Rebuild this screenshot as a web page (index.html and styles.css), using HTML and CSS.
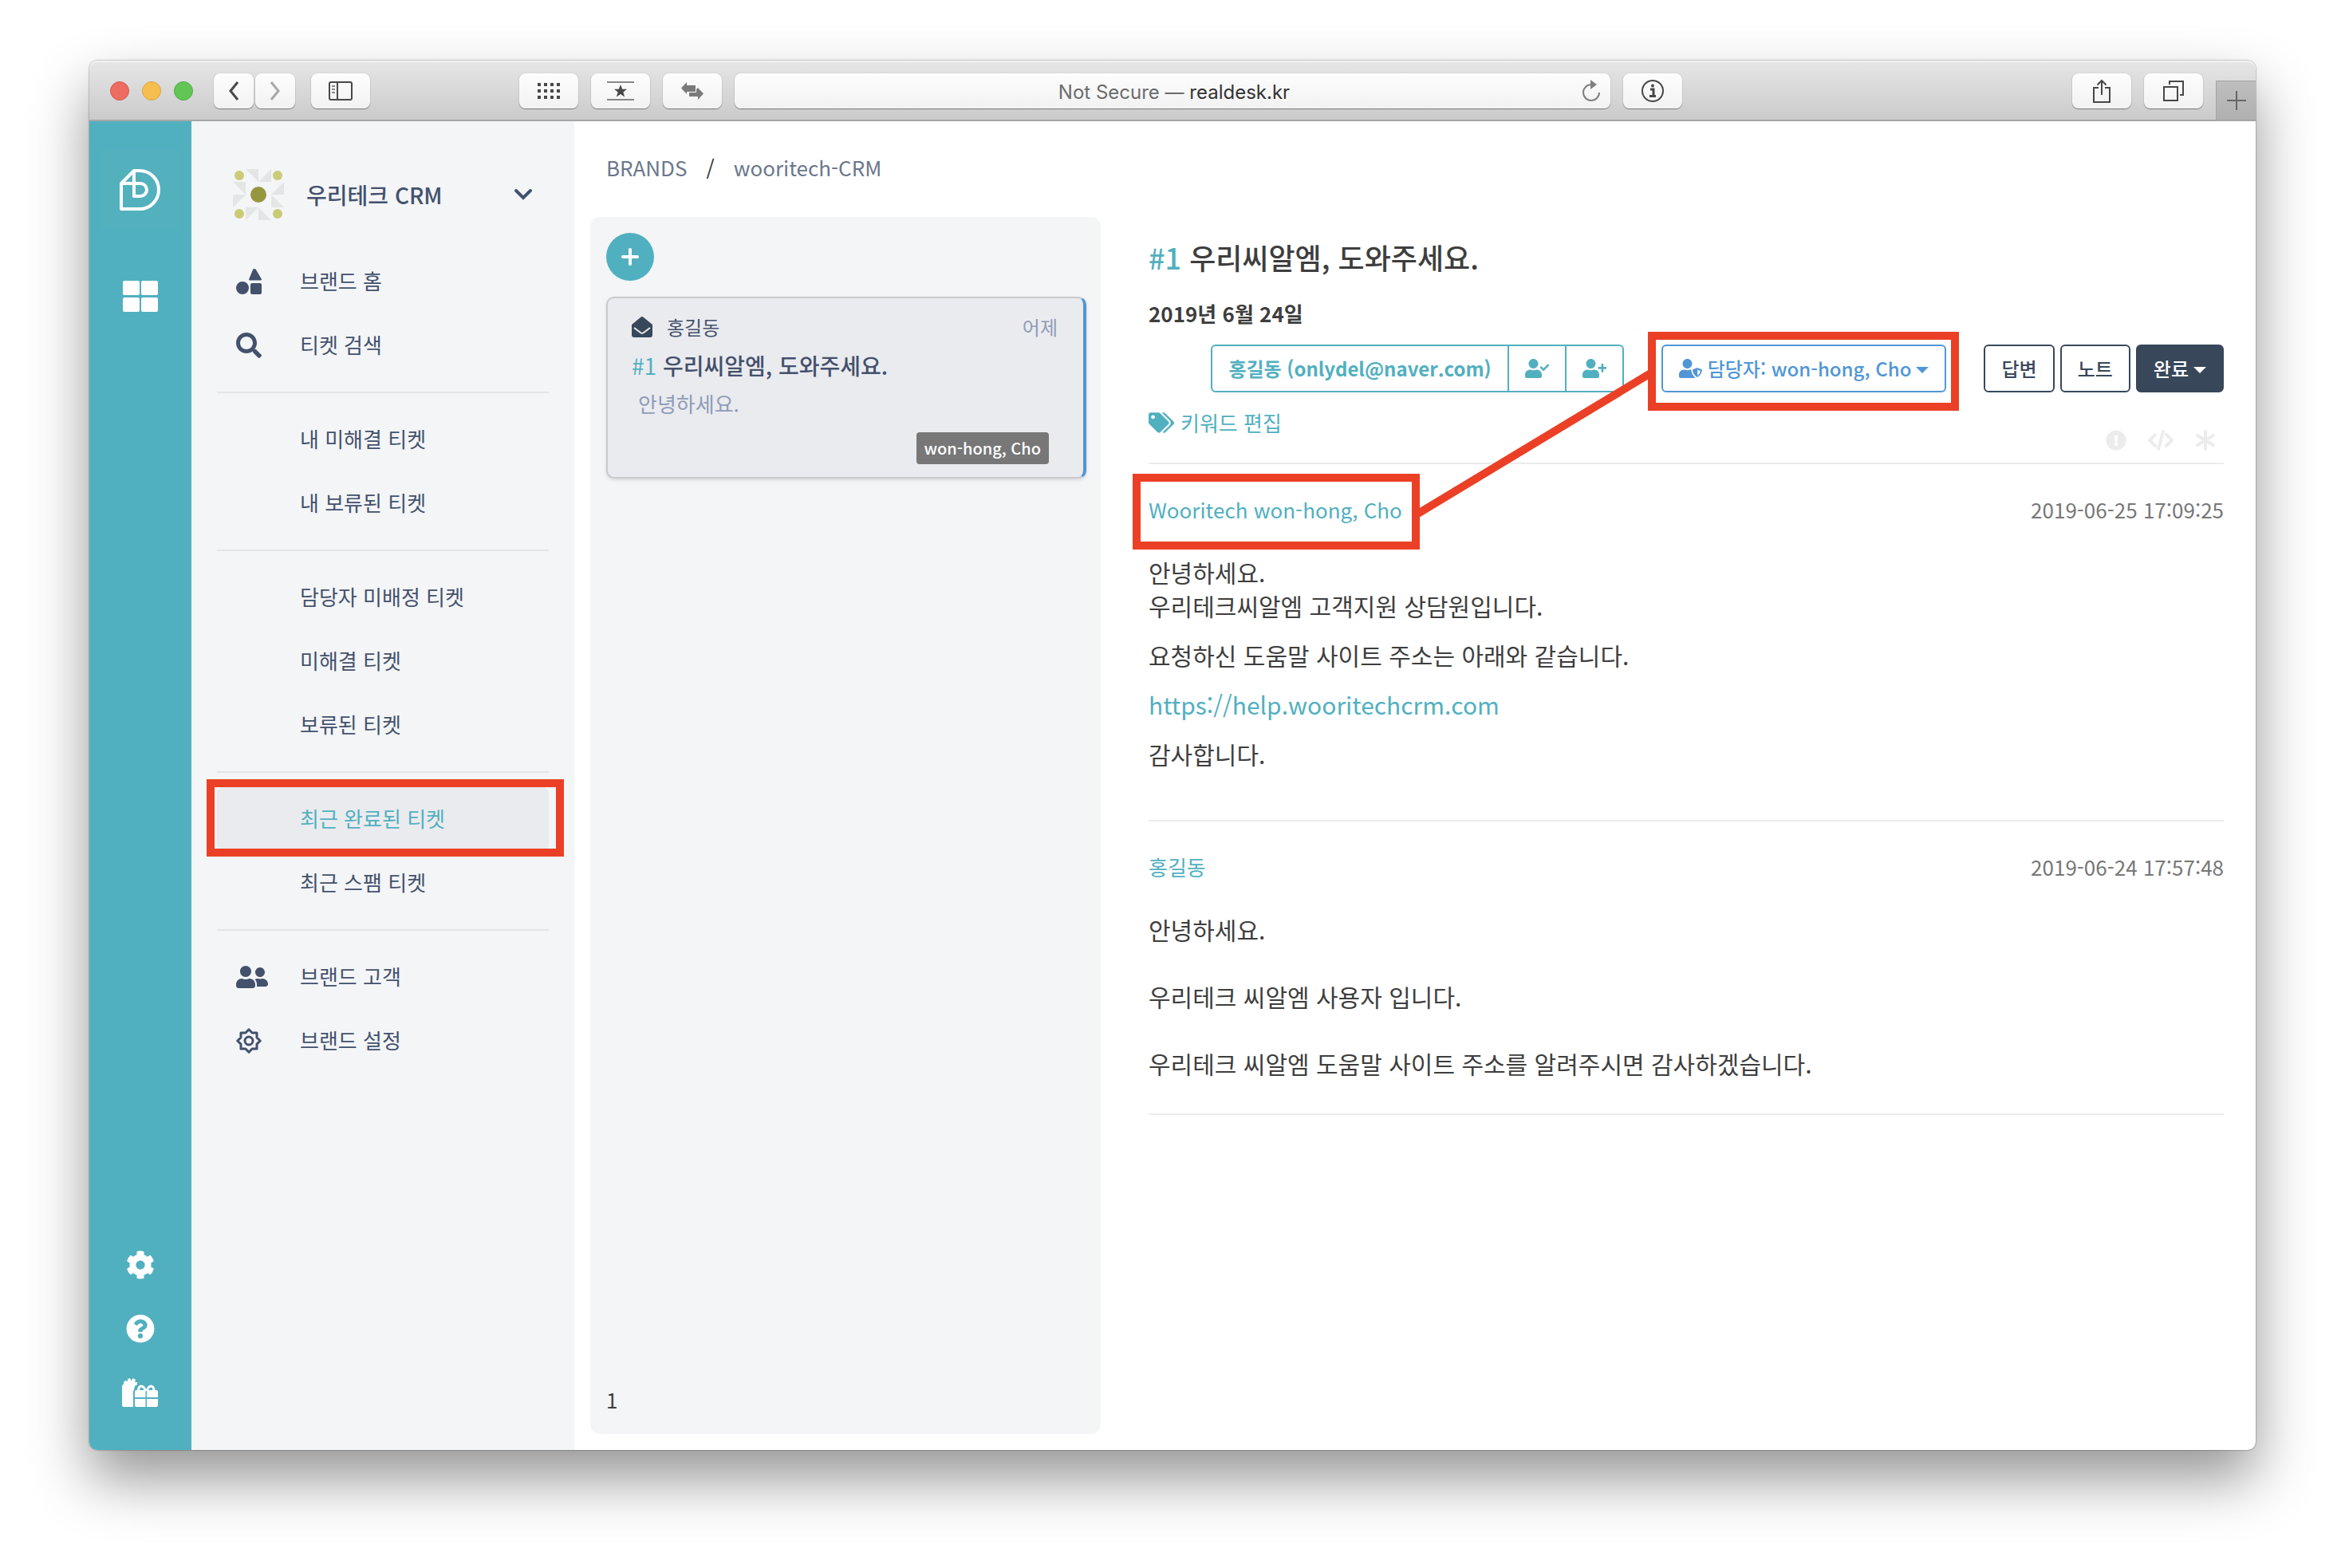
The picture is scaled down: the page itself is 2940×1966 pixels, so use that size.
FILE: index.html
```html
<!DOCTYPE html>
<html lang="ko">
<head>
<meta charset="utf-8">
<title>realdesk.kr</title>
<link rel="stylesheet" href="styles.css">
</head>
<body>
<div class="window">
  <header class="toolbar">
    <div class="lights"><span class="light light-red"></span><span class="light light-yellow"></span><span class="light light-green"></span></div>
    <div class="history">
      <button class="tool tool-small" aria-label="Back"><svg width="14" height="26" viewBox="0 0 14 26"><path d="M12 2L3 13l9 11" class="line-dark"/></svg></button>
      <button class="tool tool-small" aria-label="Forward"><svg width="14" height="26" viewBox="0 0 14 26"><path d="M2 2l9 11-9 11" class="line-light"/></svg></button>
    </div>
    <button class="tool" aria-label="Sidebar"><svg width="30" height="24" viewBox="0 0 30 24"><rect x="1" y="1" width="28" height="22" rx="2" class="line-thin"/><path d="M11 1v22" class="line-thin"/><path d="M4 6h4M4 10h4M4 14h4" stroke="#888" stroke-width="2"/></svg></button>
    <div class="tools-mid">
      <button class="tool" aria-label="Top sites"><svg width="28" height="20" viewBox="0 0 28 20"><path d="M0 2h28M0 10h28M0 18h28" stroke="#484848" stroke-width="4" stroke-dasharray="4 4"/></svg></button>
      <button class="tool" aria-label="Reading list"><svg width="34" height="24" viewBox="0 0 34 24"><path d="M0 1h34M0 23h34" stroke="#888" stroke-width="2"/><path d="M17 4l2.200 5.700h5.800l-4.600 3.700 1.700 6.100-5.100-3.600-5.100 3.600 1.700-6.100L9 9.700h5.800z" fill="#484848"/></svg></button>
      <button class="tool" aria-label="Swap"><svg width="28" height="22" viewBox="0 0 28 22"><path d="M0 7.500L7 0v4h11v8H7v3zM28 14.500L21 22v-4H10v-5h9V9l2-2z" fill="#7a7a7a"/></svg></button>
    </div>
    <button class="address"><span class="address-text">Not Secure — <span class="host">realdesk.kr</span></span>
      <svg width="24" height="28" viewBox="0 0 24 28"><path d="M12 6a10 10 0 1 0 10 10" fill="none" stroke="#808080" stroke-width="2"/><path d="M11 0l8 6-8 6z" fill="#808080"/></svg></button>
    <button class="tool" aria-label="Info"><svg width="28" height="28" viewBox="0 0 28 28"><circle cx="14" cy="14" r="13" class="line-thin"/><path d="M11 12h4v8M10 20.500h8" fill="none" stroke="#484848" stroke-width="3"/><circle cx="14" cy="7.500" r="2" fill="#484848"/></svg></button>
    <div class="tools-end">
      <button class="tool" aria-label="Share"><svg width="24" height="32" viewBox="0 0 24 32"><path d="M8 12H2v18h20V12h-6M12 21V3M6.500 8.500L12 3l5.500 5.500" class="line-thin"/></svg></button>
      <button class="tool" aria-label="Tabs"><svg width="26" height="26" viewBox="0 0 26 26"><path d="M1 8h17v17H1zM8 5V1h17v17h-4" class="line-thin"/></svg></button>
    </div>
    <button class="new-tab" aria-label="New tab"><svg width="24" height="24" viewBox="0 0 24 24"><path d="M12 0v24M0 12h24" stroke="#666" stroke-width="2"/></svg></button>
  </header>

  <div class="app">
    <nav class="rail" aria-label="앱">
      <a class="rail-logo" href="#" aria-label="RealDesk"><svg width="52" height="52" viewBox="0 0 52 52"><path d="M2 18L18 2h7a24 24 0 0 1 0 48H2zM2 18h24a8 8 0 0 1 0 16h-8V2" fill="none" stroke="#fff" stroke-width="4" stroke-linejoin="round"/></svg></a>
      <a class="rail-grid" href="#" aria-label="대시보드"><svg width="44" height="39" viewBox="0 0 44 39" fill="#fff"><rect width="21" height="18" rx="2"/><rect x="23" width="21" height="18" rx="2"/><rect y="21" width="21" height="18" rx="2"/><rect x="23" y="21" width="21" height="18" rx="2"/></svg></a>
      <div class="rail-bottom">
        <a href="#" aria-label="설정"><svg width="36" height="36" viewBox="0 0 512 512" fill="#fff"><path d="M487.400 315.700l-42.600-24.600c4.300-23.200 4.300-47 0-70.200l42.600-24.600c4.900-2.800 7.100-8.600 5.500-14-11.100-35.600-30-67.800-54.700-94.600-3.800-4.100-10-5.100-14.800-2.300L380.800 110c-17.900-15.400-38.500-27.300-60.800-35.100V25.800c0-5.600-3.900-10.500-9.400-11.700-36.700-8.200-74.300-7.800-109.200 0-5.500 1.200-9.400 6.100-9.400 11.700V75c-22.200 7.900-42.800 19.800-60.800 35.100L88.700 85.500c-4.900-2.800-11-1.900-14.800 2.300-24.700 26.700-43.600 58.900-54.700 94.600-1.700 5.400.6 11.200 5.500 14L67.300 221c-4.300 23.200-4.300 47 0 70.200l-42.600 24.600c-4.900 2.800-7.100 8.600-5.500 14 11.100 35.600 30 67.800 54.700 94.600 3.800 4.100 10 5.100 14.800 2.300l42.600-24.600c17.900 15.400 38.500 27.300 60.800 35.100v49.200c0 5.600 3.900 10.500 9.400 11.700 36.700 8.200 74.300 7.800 109.200 0 5.500-1.200 9.400-6.100 9.400-11.700v-49.200c22.200-7.900 42.800-19.800 60.800-35.100l42.600 24.600c4.900 2.800 11 1.900 14.800-2.300 24.700-26.700 43.600-58.900 54.700-94.600 1.500-5.500-.7-11.300-5.600-14.100zM256 336c-44.100 0-80-35.900-80-80s35.900-80 80-80 80 35.900 80 80-35.900 80-80 80z"/></svg></a>
        <a href="#" aria-label="도움말"><svg width="36" height="36" viewBox="0 0 512 512" fill="#fff"><path d="M504 256c0 136.997-111.043 248-248 248S8 392.997 8 256C8 119.083 119.043 8 256 8s248 111.083 248 248zM262.655 90c-54.497 0-89.255 22.957-116.549 63.758-3.536 5.286-2.353 12.415 2.715 16.258l34.699 26.310c5.205 3.947 12.621 3.008 16.665-2.122 17.864-22.658 30.113-35.797 57.303-35.797 20.429 0 45.698 13.148 45.698 32.958 0 14.976-12.363 22.667-32.534 33.976C247.128 238.528 216 254.941 216 296v4c0 6.627 5.373 12 12 12h56c6.627 0 12-5.373 12-12v-1.333c0-28.462 83.186-29.647 83.186-106.667 0-58.002-60.165-102-116.531-102zM256 338c-25.365 0-46 20.635-46 46 0 25.364 20.635 46 46 46s46-20.636 46-46c0-25.365-20.635-46-46-46z"/></svg></a>
        <a href="#" aria-label="새 소식"><svg width="46" height="36" viewBox="0 0 46 36"><path d="M0 10q0-2 2-2l0-3 2-2 3 1 0-3 3-1 1.500 3L14 0l3 2-1 3 3 0 0 3-3 2-1 4-1 3v19H2q-2 0-2-2z" fill="#fff"/><path d="M16 24v-7q0-2 2-2h11.500v9zM31 15h12q2 0 2 2v7H31zM16 26h13.500v10H18q-2 0-2-2zM31 26h14v8q0 2-2 2H31z" fill="#fff"/><path d="M29.500 16c-1-3-3-6-5.500-6s-4 3-3 6M31 16c1-3 3-6 5.500-6s4 3 3 6" fill="none" stroke="#fff" stroke-width="3"/></svg></a>
      </div>
    </nav>

    <aside class="sidebar">
      <button class="brand">
        <svg width="64" height="64" viewBox="0 0 64 64"><path d="M16 0h16v16zM32 16L48 0v16zM64 16v16H48zM48 32v16h16zM32 48v16h16zM16 48h16L16 64zM0 32h16L0 48zM0 16h16v16z" fill="#e4e5e5"/><g fill="#c9cc74"><circle cx="8" cy="8" r="6"/><circle cx="56" cy="8" r="6"/><circle cx="8" cy="56" r="6"/><circle cx="56" cy="56" r="6"/></g><circle cx="32" cy="32" r="10" fill="#96963f"/></svg>
        <span class="brand-name">우리테크 CRM</span>
        <svg width="24" height="16" viewBox="0 0 24 16"><path d="M3 3l9 9 9-9" fill="none" stroke="#44516c" stroke-width="4" stroke-linecap="round"/></svg>
      </button>
      <nav class="menu" aria-label="브랜드">
        <a class="item" href="#"><span class="item-icon"><svg width="32" height="32" viewBox="0 0 512 512"><path d="M128 256A128 128 0 1 0 256 384 128 128 0 0 0 128 256zm379-54.860L400.070 18.290a37.260 37.260 0 0 0-64.140 0L262 201.140C254 225.520 262 232 278 232H490C510 232 518 222 507 201.140zM480 288H320a32 32 0 0 0-32 32V480a32 32 0 0 0 32 32H480a32 32 0 0 0 32-32V320A32 32 0 0 0 480 288z"/></svg></span>브랜드 홈</a>
        <a class="item" href="#"><span class="item-icon"><svg width="32" height="32" viewBox="0 0 512 512"><path d="M505 442.700L405.300 343c-4.500-4.500-10.600-7-17-7H372c27.600-35.300 44-79.700 44-128C416 93.100 322.900 0 208 0S0 93.100 0 208s93.100 208 208 208c48.300 0 92.700-16.400 128-44v16.300c0 6.400 2.500 12.500 7 17l99.700 99.700c9.400 9.400 24.600 9.400 33.900 0l28.300-28.300c9.400-9.400 9.400-24.600.1-34zM208 336c-70.700 0-128-57.200-128-128 0-70.700 57.200-128 128-128 70.700 0 128 57.200 128 128 0 70.700-57.200 128-128 128z"/></svg></span>티켓 검색</a>
        <hr class="menu-rule">
        <a class="item" href="#"><span class="item-icon"></span>내 미해결 티켓</a>
        <a class="item" href="#"><span class="item-icon"></span>내 보류된 티켓</a>
        <hr class="menu-rule">
        <a class="item" href="#"><span class="item-icon"></span>담당자 미배정 티켓</a>
        <a class="item" href="#"><span class="item-icon"></span>미해결 티켓</a>
        <a class="item" href="#"><span class="item-icon"></span>보류된 티켓</a>
        <hr class="menu-rule">
        <a class="item item-current" href="#" aria-current="page"><span class="item-icon"></span>최근 완료된 티켓<span class="mark mark-menu"></span></a>
        <a class="item" href="#"><span class="item-icon"></span>최근 스팸 티켓</a>
        <hr class="menu-rule">
        <a class="item" href="#"><span class="item-icon"><svg width="40" height="32" viewBox="0 0 640 512"><path d="M192 256c61.900 0 112-50.100 112-112S253.900 32 192 32 80 82.100 80 144s50.100 112 112 112zm76.800 32h-8.300c-20.800 10-43.900 16-68.500 16s-47.600-6-68.500-16h-8.300C51.600 288 0 339.600 0 403.200V432c0 26.500 21.500 48 48 48h288c26.500 0 48-21.500 48-48v-28.800c0-63.600-51.600-115.200-115.200-115.200zM480 256c53 0 96-43 96-96s-43-96-96-96-96 43-96 96 43 96 96 96zm48 32h-3.800c-13.900 4.800-28.600 8-44.200 8s-30.300-3.200-44.200-8H432c-20.400 0-39.200 5.900-55.700 15.400 24.400 26.300 39.700 61.200 39.700 99.800v38.400c0 2.200-.5 4.300-.6 6.400H592c26.500 0 48-21.500 48-48 0-61.900-50.100-112-112-112z"/></svg></span>브랜드 고객</a>
        <a class="item" href="#"><span class="item-icon"><svg width="32" height="32" viewBox="-16 -16 32 32"><g fill="none" stroke="#44516c" stroke-width="3" stroke-linejoin="round"><path d="M14.200 0L10 4.100V10H4.100L0 14.200-4.100 10H-10V4.100L-14.200 0-10-4.100V-10h5.900L0-14.200 4.100-10H10v5.900z"/><circle r="5"/></g></svg></span>브랜드 설정</a>
      </nav>
    </aside>

    <main class="main">
      <nav class="crumbs" aria-label="위치"><a href="#">BRANDS</a><span class="crumb-sep">/</span><a href="#">wooritech-CRM</a></nav>
      <div class="panes">
        <section class="list">
          <button class="add" aria-label="새 티켓"><svg width="24" height="24" viewBox="0 0 24 24"><path d="M12 3v18M3 12h18" stroke="#fff" stroke-width="4" stroke-linecap="round"/></svg></button>
          <a class="card" href="#">
            <span class="card-top">
              <svg width="26" height="26" viewBox="0 0 26 26"><path d="M0 10L11 1q2-2 4 0l11 9v13q0 3-3 3H3q-3 0-3-3z" fill="#38485a"/><path d="M3 14l8 6q2 1.500 4 0l8-6" fill="none" stroke="#eaebef" stroke-width="2"/></svg>
              <span class="card-from">홍길동</span><span class="card-when">어제</span>
            </span>
            <span class="card-title"><span class="num">#1</span> 우리씨알엠, 도와주세요.</span>
            <span class="card-text">안녕하세요.</span>
            <span class="card-tag">won-hong, Cho</span>
          </a>
          <div class="pager">1</div>
        </section>

        <article class="ticket">
          <h1 class="ticket-title"><span class="num-title">#1</span> 우리씨알엠, 도와주세요.</h1>
          <p class="ticket-date">2019년 6월 24일</p>
          <div class="actions">
            <div class="group">
              <button class="btn btn-teal btn-strong">홍길동 (onlydel@naver.com)</button>
              <button class="btn btn-teal btn-icon" aria-label="고객 확인"><svg width="30" height="24" viewBox="0 0 640 512"><use href="#user"/><path d="M430 226l66 66 118-124" fill="none" stroke="currentColor" stroke-width="56" stroke-linecap="round"/></svg></button>
              <button class="btn btn-teal btn-icon" aria-label="고객 추가"><svg width="30" height="24" viewBox="0 0 640 512"><use href="#user"/><path d="M532 150v184M440 242h184" fill="none" stroke="currentColor" stroke-width="56" stroke-linecap="round"/></svg></button>
            </div>
            <div class="assignee">
              <button class="btn btn-blue" aria-haspopup="true"><svg width="30" height="24" viewBox="0 0 640 512"><use href="#user"/><path d="M490 220l145 52c0 116-56 196-145 238-89-42-145-122-145-238z" fill="currentColor" stroke="#fff" stroke-width="36"/><path d="M494 290l76 28c-4 56-30 98-76 128z" fill="#fff"/></svg><span>담당자: won-hong, Cho</span><span class="caret"></span></button>
              <span class="mark mark-assignee"></span>
            </div>
            <div class="replies">
              <button class="btn btn-navy">답변</button>
              <button class="btn btn-navy">노트</button>
              <button class="btn btn-solid" aria-haspopup="true"><span>완료</span><span class="caret"></span></button>
            </div>
          </div>
          <div class="meta">
            <a class="tags" href="#"><svg width="32" height="26" viewBox="0 0 640 512" fill="currentColor"><path d="M497.941 225.941L286.059 14.059A48 48 0 0 0 252.118 0H48C21.490 0 0 21.490 0 48v204.118a48 48 0 0 0 14.059 33.941l211.882 211.882c18.744 18.745 49.136 18.746 67.882 0l204.118-204.118c18.745-18.745 18.745-49.137 0-67.882zM112 160c-26.510 0-48-21.490-48-48s21.490-48 48-48 48 21.490 48 48-21.490 48-48 48zm513.941 133.823L421.823 497.941c-18.745 18.745-49.137 18.745-67.882 0l-.36-.36L527.640 323.522c16.999-16.999 26.360-39.600 26.360-63.640s-9.362-46.641-26.360-63.640L331.397 0h48.721a48 48 0 0 1 33.941 14.059l211.882 211.882c18.745 18.745 18.745 49.137 0 67.882z"/></svg>키워드 편집</a>
            <div class="flags">
              <button class="flag" aria-label="알림"><svg width="26" height="26" viewBox="0 0 512 512" fill="currentColor"><path d="M504 256c0 136.997-111.043 248-248 248S8 392.997 8 256C8 119.083 119.043 8 256 8s248 111.083 248 248zm-248 50c-25.405 0-46 20.595-46 46s20.595 46 46 46 46-20.595 46-46-20.595-46-46-46zm-43.673-165.346l7.418 136c.347 6.364 5.609 11.346 11.982 11.346h48.546c6.373 0 11.635-4.982 11.982-11.346l7.418-136c.375-6.874-5.098-12.654-11.982-12.654h-63.383c-6.884 0-12.356 5.780-11.981 12.654z"/></svg></button>
              <button class="flag" aria-label="코드"><svg width="32" height="26" viewBox="0 0 32 26"><path d="M9 6l-7 7 7 7M23 6l7 7-7 7M19 2l-6 22" fill="none" stroke="currentColor" stroke-width="4" stroke-linecap="round" stroke-linejoin="round"/></svg></button>
              <button class="flag" aria-label="별표"><svg width="26" height="26" viewBox="0 0 26 26"><path d="M13 2v22M3 7l20 12M23 7L3 19" stroke="currentColor" stroke-width="4" stroke-linecap="round"/></svg></button>
            </div>
          </div>

          <section class="message">
            <header class="message-head"><a class="author" href="#">Wooritech won-hong, Cho<span class="mark mark-author"></span></a><time>2019-06-25 17:09:25</time></header>
            <p>안녕하세요.<br>우리테크씨알엠 고객지원 상담원입니다.</p>
            <p>요청하신 도움말 사이트 주소는 아래와 같습니다.</p>
            <p><a href="#">https://help.wooritechcrm.com</a></p>
            <p>감사합니다.</p>
          </section>
          <section class="message message-last">
            <header class="message-head"><a class="author" href="#">홍길동</a><time>2019-06-24 17:57:48</time></header>
            <p>안녕하세요.<br><br>우리테크 씨알엠 사용자 입니다.<br><br>우리테크 씨알엠 도움말 사이트 주소를 알려주시면 감사하겠습니다.</p>
          </section>
          <svg class="connector" viewBox="0 0 287 174" preserveAspectRatio="none"><path d="M-4 176L291-2" stroke="#eb4026" stroke-width="10"/></svg>
        </article>
      </div>
    </main>
  </div>
</div>
<svg class="defs" width="0" height="0" aria-hidden="true"><symbol id="user" viewBox="0 0 640 512"><path fill="currentColor" d="M224 256c70.700 0 128-57.300 128-128S294.700 0 224 0 96 57.300 96 128s57.300 128 128 128zm89.600 32h-16.700c-22.200 10.200-46.900 16-72.900 16s-50.600-5.800-72.900-16h-16.700C60.200 288 0 348.200 0 422.400V464c0 26.500 21.500 48 48 48h352c26.500 0 48-21.500 48-48v-41.600c0-74.200-60.200-134.400-134.400-134.400z"/></symbol></svg>
</body>
</html>
```
FILE: styles.css
```css
:root {
  --teal: #51b0bf;
  --ink: #44516c;
  --navy: #38485a;
  --blue: #5196d6;
  --red: #eb4026;
  --pale: #f3f5f7;
  --rule: #ececec;
}

* { box-sizing: border-box; }

body {
  margin: 0;
  min-height: 100vh;
  padding: 76px 112px 148px;
  display: flex;
  background: #fff;
  color: #3e3e3e;
  font: 26px/40px "Noto Sans CJK KR", "Noto Sans", sans-serif;
}

a { color: inherit; text-decoration: none; }
button { margin: 0; padding: 0; border: 0; background: none; color: inherit; font: inherit; }
svg { display: block; flex: none; }
.defs { position: absolute; }

.window {
  flex: 1;
  display: flex;
  flex-direction: column;
  border-radius: 10px;
  background: #fff;
  box-shadow: 0 0 2px rgba(0, 0, 0, .6), 0 36px 72px rgba(0, 0, 0, .42);
}

/* browser toolbar */
.toolbar {
  display: flex;
  align-items: center;
  height: 76px;
  padding: 2px 0 0 26px;
  border-bottom: 2px solid #a6a6a6;
  border-radius: 10px 10px 0 0;
  background: linear-gradient(#e6e6e6, #cbcbcb);
  box-shadow: inset 0 2px #f2f2f2;
}
.lights { display: flex; gap: 16px; margin-right: 26px; }
.light { width: 24px; height: 24px; border-radius: 50%; border: 1px solid; }
.light-red { background: #ed6b60; border-color: #d8574d; }
.light-yellow { background: #f5be4f; border-color: #dba53c; }
.light-green { background: #62c654; border-color: #50ab42; }
.history { display: flex; gap: 2px; margin-right: 20px; }
.tool, .address {
  display: flex;
  align-items: center;
  justify-content: center;
  width: 74px;
  height: 44px;
  border-radius: 8px;
  background: linear-gradient(#fdfdfd, #f2f2f2);
  box-shadow: 0 0 1px rgba(0, 0, 0, .35), 0 1px 1px rgba(0, 0, 0, .4);
}
.tool-small { width: 50px; }
.line-dark, .line-light, .line-thin { fill: none; stroke: #484848; stroke-width: 3; }
.line-light { stroke: #a8a8a8; }
.line-thin { stroke-width: 2; }
.tools-mid { display: flex; gap: 16px; margin: 0 16px 0 187px; }
.address { flex: 1; margin-right: 16px; padding: 0 12px; font: 24px/30px Inter, sans-serif; color: #6c6c6c; }
.address-text { flex: 1; padding: 3px 0 0 28px; text-align: center; }
.host { color: #333; }
.tools-end { display: flex; gap: 16px; margin: 0 16px 0 489px; }
.new-tab {
  display: flex;
  align-items: center;
  justify-content: center;
  align-self: flex-end;
  width: 50px;
  height: 49px;
  border-top: 1px solid #a4a4a4;
  border-left: 1px solid #a4a4a4;
  background: linear-gradient(#bebebe, #b0b0b0);
}

/* application shell */
.app { flex: 1; display: flex; }

.rail {
  display: flex;
  flex-direction: column;
  align-items: center;
  width: 128px;
  padding: 36px 0 54px;
  border-radius: 0 0 0 10px;
  background: var(--teal);
}
.rail-logo { display: flex; align-items: center; justify-content: center; width: 100px; height: 100px; background: #53b1bd; }
.rail-grid { margin-top: 64px; }
.rail-bottom { display: flex; flex-direction: column; align-items: center; gap: 44px; margin-top: auto; }

.sidebar { width: 480px; padding: 60px 32px; background: var(--pale); color: var(--ink); }
.brand {
  display: flex;
  align-items: center;
  width: 100%;
  margin-bottom: 37px;
  padding: 0 20px;
  font-size: 28px;
  font-weight: 500;
}
.brand-name { flex: 1; padding-left: 28px; text-align: left; }
.item {
  display: flex;
  align-items: center;
  position: relative;
  height: 80px;
  padding: 0 0 2px 24px;
  border-radius: 8px;
}
.item-icon { width: 80px; padding-top: 2px; fill: currentColor; }
.item-current { background: #eaebef; color: var(--teal); }
.menu-rule { height: 2px; margin: 18px 0; border: 0; background: #e3e5e7; }

.main { flex: 1; min-width: 0; display: flex; flex-direction: column; padding: 38px 40px 20px 20px; }
.crumbs { display: flex; gap: 24px; padding-left: 20px; color: #6b778c; }
.crumb-sep { color: #333; }
.panes { flex: 1; display: flex; gap: 60px; margin-top: 42px; }

/* ticket list */
.list { display: flex; flex-direction: column; width: 640px; padding: 20px; border-radius: 12px; background: var(--pale); }
.add { display: flex; align-items: center; justify-content: center; width: 60px; height: 60px; border-radius: 50%; background: var(--teal); }
.card {
  display: flex;
  flex-direction: column;
  margin: 20px -2px 0 0;
  padding: 16px 32px 16px 30px;
  border: 2px solid #c8cacb;
  border-right: 4px solid var(--blue);
  border-radius: 10px;
  background: #eaebef;
  box-shadow: 0 2px 4px rgba(0, 0, 0, .12);
  color: var(--ink);
}
.card-top { display: flex; align-items: center; font-size: 24px; }
.card-from { flex: 1; padding-left: 18px; }
.card-when, .card-text { color: #8f9cb8; }
.card-title { padding: 8px 0; font-size: 28px; font-weight: 500; }
.card-text { padding-left: 8px; }
.num { color: var(--teal); font-weight: 400; }
.card-tag {
  align-self: flex-end;
  margin: 16px 11px 0 0;
  padding: 0 10px;
  border-radius: 4px;
  background: #777;
  color: #fff;
  font-size: 20px;
  font-weight: 500;
}
.pager { margin-top: auto; padding-bottom: 3px; }

/* ticket detail */
.ticket { flex: 1; min-width: 0; position: relative; padding-top: 26px; }
.ticket-title { margin: 0; font-size: 36px; line-height: 48px; font-weight: 500; }
.num-title { color: var(--teal); }
.ticket-date { margin: 27px 0 19px; font-weight: 700; }
.actions { display: flex; justify-content: flex-end; }
.btn {
  display: flex;
  align-items: center;
  gap: 6px;
  height: 60px;
  padding: 0 20px;
  border: 2px solid;
  border-radius: 6px;
  background: #fff;
  font-size: 24px;
  font-weight: 500;
  white-space: nowrap;
}
.group { display: flex; }
.group .btn + .btn { margin-left: -2px; border-top-left-radius: 0; border-bottom-left-radius: 0; }
.group .btn:not(:last-child) { border-top-right-radius: 0; border-bottom-right-radius: 0; }
.btn-teal { color: var(--teal); }
.btn-strong { font-weight: 700; }
.btn-blue { color: var(--blue); }
.btn-navy, .btn-solid { color: var(--navy); }
.btn-solid { background: var(--navy); border-color: var(--navy); color: #fff; }
.caret { margin-top: 4px; border: 8px solid transparent; border-top-color: currentColor; border-bottom: 0; }
.assignee { position: relative; margin: 0 47px; }
.replies { display: flex; gap: 7px; }
.meta { display: flex; justify-content: space-between; height: 90px; padding-top: 18px; border-bottom: 2px solid var(--rule); }
.tags { display: flex; align-items: center; gap: 8px; height: 40px; color: var(--teal); }
.flags { display: flex; gap: 27px; align-items: flex-end; padding: 0 10px 15px 0; }
.flag { color: var(--rule); }
.message { padding: 37px 0 62px; border-bottom: 2px solid var(--rule); font-size: 30px; line-height: 42px; }
.message-last { padding-bottom: 42px; }
.message-head { display: flex; justify-content: space-between; margin-bottom: 37px; font-size: 26px; line-height: 40px; }
.message-head time { color: #777; }
.message p { margin: 0; }
.message p + p { margin-top: 20px; }
.message a { color: var(--teal); }
.author { position: relative; }

/* red call-outs laid over the interface */
.mark { position: absolute; border: 10px solid var(--red); pointer-events: none; }
.mark-menu { inset: -10px -19px -7px -13px; }
.mark-assignee { inset: -16px -16px -23px -17px; }
.mark-author { inset: -25px -22px -30px -20px; }
.connector { position: absolute; left: 340px; right: 721px; top: 197px; width: calc(100% - 1061px); height: 174px; overflow: visible; pointer-events: none; }
```
